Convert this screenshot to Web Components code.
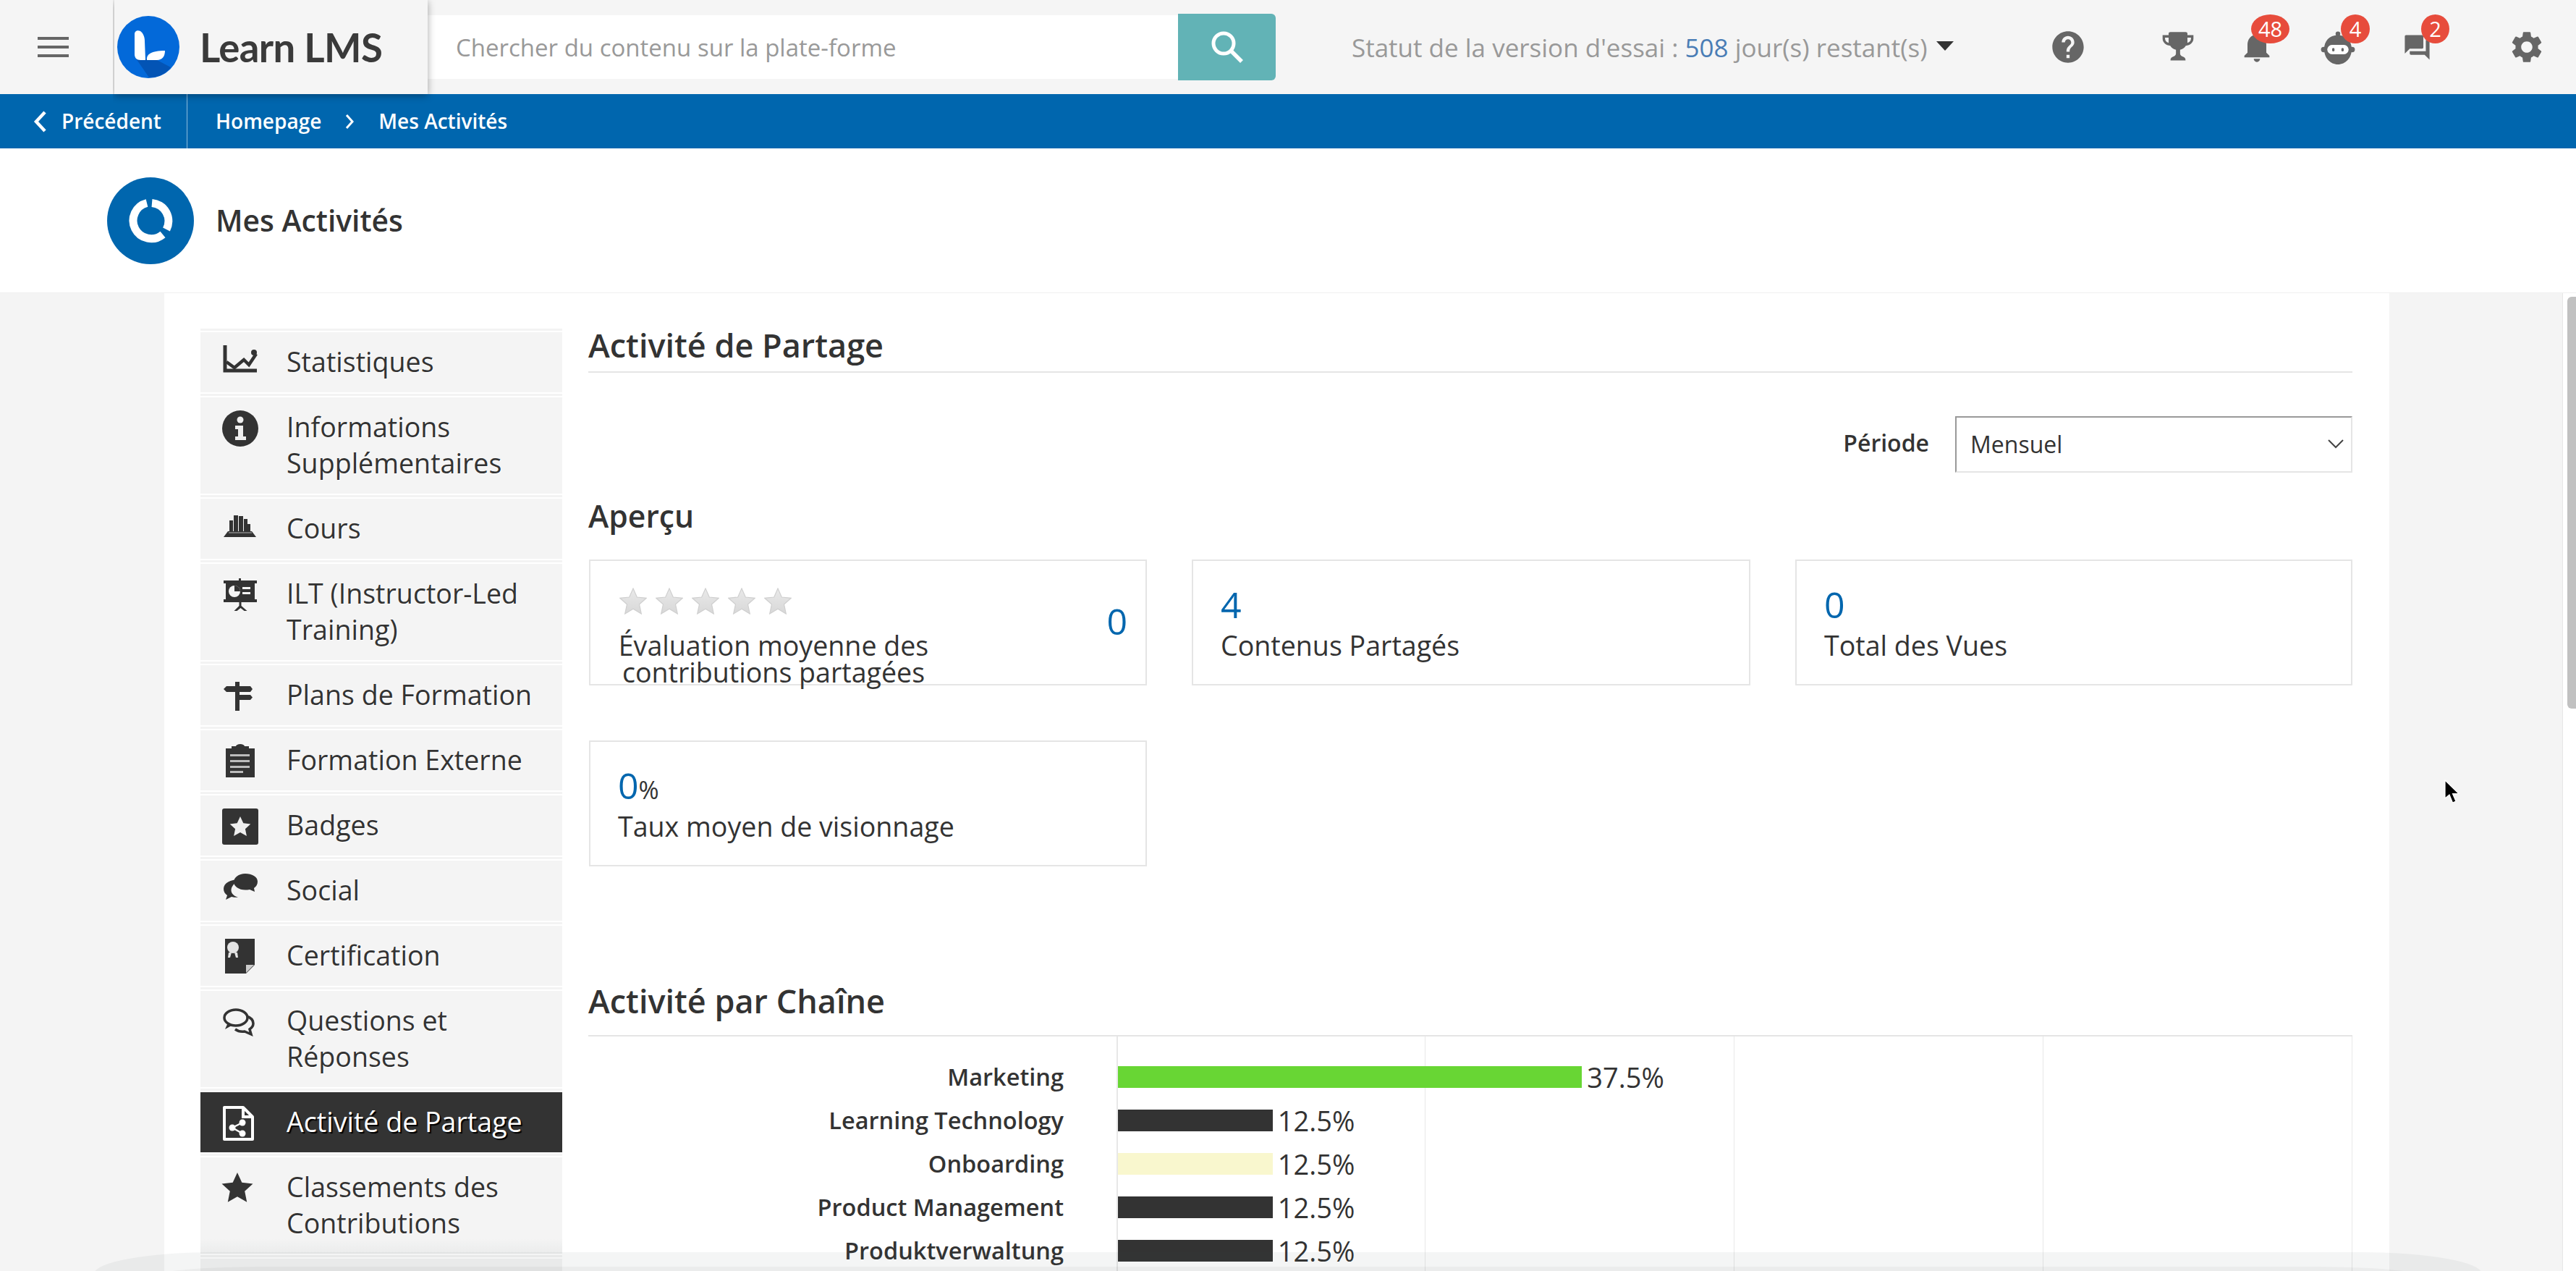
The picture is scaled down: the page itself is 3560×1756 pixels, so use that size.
<!DOCTYPE html>
<html lang="fr"><head><meta charset="utf-8"><title>Mes Activités</title>
<style>
html,body{margin:0;padding:0;height:1756px;overflow:hidden;background:#f4f4f4;font-family:"Open Sans","Noto Sans",sans-serif;color:#333}
</style></head>
<body>
<lms-app>
  <lms-topbar slot="top"></lms-topbar>
  <lms-crumbs slot="top"></lms-crumbs>
  <lms-title slot="top">Mes Activités</lms-title>
  <lms-panel>
    <lms-sidenav slot="side">
      <lms-nav icon="stats">Statistiques</lms-nav>
      <lms-nav icon="info">Informations Supplémentaires</lms-nav>
      <lms-nav icon="books">Cours</lms-nav>
      <lms-nav icon="ilt">ILT (Instructor-Led Training)</lms-nav>
      <lms-nav icon="sign">Plans de Formation</lms-nav>
      <lms-nav icon="clip">Formation Externe</lms-nav>
      <lms-nav icon="badge">Badges</lms-nav>
      <lms-nav icon="social">Social</lms-nav>
      <lms-nav icon="cert">Certification</lms-nav>
      <lms-nav icon="qa">Questions et Réponses</lms-nav>
      <lms-nav icon="share" active>Activité de Partage</lms-nav>
      <lms-nav icon="star" fade>Classements des Contributions</lms-nav>
      <lms-nav icon="none">&nbsp;</lms-nav>
    </lms-sidenav>
    <lms-heading size="top">Activité de Partage</lms-heading>
    <lms-period></lms-period>
    <lms-subhead>Aperçu</lms-subhead>
    <lms-cards>
      <lms-rating-card></lms-rating-card>
      <lms-stat value="4" label="Contenus Partagés"></lms-stat>
      <lms-stat value="0" label="Total des Vues"></lms-stat>
      <lms-stat value="0" unit="%" label="Taux moyen de visionnage"></lms-stat>
    </lms-cards>
    <lms-heading size="chart">Activité par Chaîne</lms-heading>
    <lms-chart>
      <lms-bar label="Marketing" pct="37.5" color="#68d634"></lms-bar>
      <lms-bar label="Learning Technology" pct="12.5" color="#333"></lms-bar>
      <lms-bar label="Onboarding" pct="12.5" color="#f9f7ce"></lms-bar>
      <lms-bar label="Product Management" pct="12.5" color="#333"></lms-bar>
      <lms-bar label="Produktverwaltung" pct="12.5" color="#333"></lms-bar>
    </lms-chart>
  </lms-panel>
  <lms-scrollbar></lms-scrollbar>
  <lms-dock></lms-dock>
  <lms-cursor></lms-cursor>
</lms-app>
<script>
const FONT='"Open Sans","Noto Sans",sans-serif';
function def(name,html,init){
  customElements.define(name,class extends HTMLElement{
    constructor(){super();const r=this.attachShadow({mode:'open'});r.innerHTML=typeof html==='function'?html(this):html;}
    connectedCallback(){ if(init) init(this); }
  });
}
const I={
 help:'<path fill="#666" d="M12 2C6.48 2 2 6.48 2 12s4.48 10 10 10 10-4.48 10-10S17.52 2 12 2zm1 17h-2v-2h2v2zm2.07-7.75l-.9.92C13.45 12.9 13 13.5 13 15h-2v-.5c0-1.1.45-2.1 1.17-2.83l1.24-1.26c.37-.36.59-.86.59-1.41 0-1.1-.9-2-2-2s-2 .9-2 2H8c0-2.21 1.79-4 4-4s4 1.79 4 4c0 .88-.36 1.68-.93 2.25z"/>',
 trophy:'<path fill="#666" d="M8 2.400h8c.6 0 1 .4 1 1v1h3.200v2.200c0 2.500-1.700 4.300-4.100 4.600-.6 1.300-1.700 2.200-3 2.500v2.500c0 1 .7 1.700 1.700 2 .8.3 1.200 1 1.200 2.300H8c0-1.300.4-2 1.200-2.300 1-.3 1.700-1 1.700-2v-2.500c-1.300-.3-2.400-1.200-3-2.500-2.400-.3-4.100-2.100-4.100-4.600V4.400H7v-1c0-.6.4-1 1-1zM5.100 6v.6c0 1.300.7 2.300 1.900 2.700V6H5.100zM17 6v3.300c1.200-.4 1.900-1.400 1.900-2.700V6H17z"/>',
 bell:'<path fill="#666" d="M12 22c1.100 0 2-.9 2-2h-4c0 1.100.89 2 2 2zm6-6v-5c0-3.070-1.640-5.640-4.500-6.320V4c0-.83-.67-1.500-1.500-1.500s-1.500.67-1.500 1.500v.68C7.630 5.360 6 7.920 6 11v5l-2 2v1h16v-1l-2-2z"/>',
 robot:'<circle cx="12" cy="2.600" r="1.500" fill="#666"/><path fill="#666" d="M12 3.500c5.500 0 8.800 3.800 8.800 9 0 5.500-4 9.700-8.800 9.700s-8.800-4.200-8.800-9.700c0-5.200 3.300-9 8.800-9z"/><circle cx="2.900" cy="12.700" r="1.700" fill="#666"/><circle cx="21.100" cy="12.700" r="1.700" fill="#666"/><rect x="5.200" y="9.700" width="13.600" height="6" rx="3" fill="#fff"/><rect x="8.300" y="11.600" width="1.500" height="2.200" rx=".7" fill="#666"/><rect x="14.200" y="11.600" width="1.500" height="2.200" rx=".7" fill="#666"/>',
 chat:'<path fill="#666" d="M21 6h-2v9H6v2c0 .55.45 1 1 1h11l4 4V7c0-.55-.45-1-1-1zm-4 6V3c0-.55-.45-1-1-1H3c-.55 0-1 .45-1 1v14l4-4h10c.55 0 1-.45 1-1z"/>',
 gear:'<path fill="#666" d="M19.140 12.940c.04-.3.06-.61.06-.94 0-.32-.02-.64-.07-.94l2.030-1.580c.18-.14.23-.41.12-.61l-1.920-3.320c-.12-.22-.37-.29-.59-.22l-2.390.96c-.5-.38-1.030-.7-1.620-.94l-.36-2.540c-.04-.24-.24-.41-.48-.41h-3.840c-.24 0-.43.17-.47.41l-.36 2.540c-.59.24-1.130.57-1.620.94l-2.390-.96c-.22-.08-.47 0-.59.22L2.740 8.870c-.12.21-.08.47.12.61l2.030 1.580c-.05.3-.09.63-.09.94s.02.64.07.94l-2.030 1.580c-.18.14-.23.41-.12.61l1.920 3.320c.12.22.37.29.59.22l2.390-.96c.5.38 1.030.7 1.620.94l.36 2.540c.05.24.24.41.48.41h3.840c.24 0 .44-.17.47-.41l.36-2.540c.59-.24 1.130-.56 1.620-.94l2.390.96c.22.08.47 0 .59-.22l1.920-3.320c.12-.22.07-.47-.12-.61l-2.010-1.580zM12 15.600c-1.980 0-3.600-1.620-3.600-3.600s1.620-3.600 3.600-3.600 3.600 1.620 3.600 3.600-1.620 3.600-3.600 3.600z"/>'
};
const N={
 none:'',
 stats:'<path d="M4 0v35h44" fill="none" stroke="#333" stroke-width="5"/><path d="M6 23l11 8 13-11 7 7 10-15" fill="none" stroke="#333" stroke-width="4.500"/><circle cx="44" cy="10" r="4" fill="#333"/>',
 info:'<circle cx="25" cy="25" r="25" fill="#333"/><circle cx="25" cy="13" r="4.500" fill="#eee"/><path d="M18 21h11v15h4v5H18v-5h4V26h-4z" fill="#eee"/>',
 books:'<path fill="#333" d="M2 35l6-8h2V12h5v15h1V5h6v22h1V6h6v21h1V10h5v7h4v10h2l6 8z"/><path d="M9 29h32" stroke="#888" stroke-width="1.500"/>',
 ilt:'<rect x="23" y="2" width="3" height="4" fill="#333"/><path fill="#333" d="M2 5h46v4h-3v22h3v4H2v-4h3V9H2z"/><circle cx="17" cy="20" r="8" fill="#f4f4f4"/><path d="M17 20V12a8 8 0 0 1 8 8z" fill="#333"/><path d="M28 14h11v3H28zM28 21h11v3H28z" fill="#f4f4f4"/><path d="M23.500 35h3v5l8 7h-4l-5-4-5 4h-4l7-7z" fill="#333"/>',
 sign:'<rect x="18" y="5" width="6" height="40" fill="#333"/><path fill="#333" d="M6 11h35l-2 0 3 4-3 4H6l-4-4z"/><path fill="#333" d="M24 23h15l3 3.500-3 3.500H24z"/>',
 clip:'<path fill="#333" d="M5 7h8V4h6a6 3 0 0 1 12 0h6v3h8v40H5z"/><g fill="#bbb"><rect x="11" y="15" width="27" height="3"/><rect x="11" y="23" width="27" height="3"/><rect x="11" y="31" width="27" height="3"/><rect x="11" y="38" width="18" height="3"/></g><rect x="14" y="7" width="22" height="4" fill="#333"/>',
 badge:'<rect x="0" y="0" width="50" height="50" rx="3" fill="#333"/><path fill="#eee" d="M25 11l4.300 9.200 10 1.200-7.400 6.800 2 9.800-8.900-5-8.900 5 2-9.800-7.400-6.800 10-1.200z"/>',
 social:'<path fill="#333" d="M23 8C12 8 2 13 2 21c0 4 2 7 5 9l-2 6 8-4c3 .7 6 1 9 .8-7-2-11-7-9-13 2-5 7-9 10-11z" /><path fill="#333" d="M32 0c9 0 17 4 17 11 0 4-2 7-5 9l1 5-7-3c-2 .4-4 .6-6 .6-9 0-16-5-16-11S23 0 32 0z"/>',
 cert:'<path fill="#333" d="M4 0h41v36l-12 12H4z"/><path fill="#ccc" d="M33 47l11-11H33z"/><circle cx="15" cy="12" r="8" fill="#e4e4e4"/><path d="M9 19h4l-2 7h-3zM17 19h4l1 7h-3z" fill="#e4e4e4"/>',
 qa:'<g fill="none" stroke="#333" stroke-width="3.500"><ellipse cx="19" cy="19" rx="16" ry="11"/><path d="M34 17c6 2 9 6 9 10 0 3-2 6-5 8l2 7-9-4c-4 .6-9 0-13-3"/></g><path d="M8 26l-4 9 9-5z" fill="#333"/>',
 share:'<path d="M3 3h26l13 13v31H3z" fill="none" stroke="#fff" stroke-width="4" stroke-linejoin="round"/><path d="M29 3v13h13" fill="none" stroke="#fff" stroke-width="4"/><g fill="#fff"><circle cx="14" cy="31" r="4.500"/><circle cx="28" cy="24" r="4.500"/><circle cx="28" cy="39" r="4.500"/></g><path d="M14 31l14-7M14 31l14 8" stroke="#fff" stroke-width="2.500"/>',
 star:'<path fill="#333" d="M21 3l6.300 13.800 15.200 1.800-11.300 10.200 3 15-13.200-7.500-13.200 7.500 3-15L-.5 18.600l15.200-1.800z"/>'
};

def('lms-app',`<style>
:host{display:block;position:relative;width:3560px;height:1756px;overflow:hidden}
</style><slot name="top"></slot><slot></slot>`);

def('lms-topbar',`<style>
:host{display:flex;height:130px;background:#f5f5f5;align-items:stretch;font-family:${FONT};position:relative;z-index:2}
.burger{width:106px;padding-left:52px;display:flex;align-items:center}
.logo{width:433px;display:flex;align-items:center;gap:28px;box-sizing:border-box;padding-left:4px;background:#f5f5f5;box-shadow:0 2px 10px rgba(0,0,0,.35);clip-path:inset(0 -12px -14px -2px)}
.logo span{font:700 54.500px/1 Lato,${FONT};color:#3a3a3a;letter-spacing:-.6px;white-space:nowrap}
.search{display:flex;align-items:center}
.field{width:1037px;height:88px;background:#fff;display:flex;align-items:center;padding-left:39px;box-sizing:border-box;color:#999;font-size:33px;white-space:nowrap}
.btn{width:135px;height:92px;background:#62b3b6;border-radius:0 6px 6px 0;display:flex;align-items:center;justify-content:center}
.status{margin-left:105px;display:flex;align-items:center;font-size:35px;color:#999;white-space:nowrap}
.status b{font-weight:400;color:#4a7db5}
.caret{width:0;height:0;border:12px solid transparent;border-top:13px solid #333;border-bottom:0;margin-left:12px;margin-top:-4px}
.icons{margin-left:auto;padding-right:42px;display:flex;align-items:center}
.ic{position:relative;width:52px;height:52px;display:flex;align-items:center;justify-content:center}
.ic svg{width:52px;height:52px;display:block;flex:none}
.bd{position:absolute;top:-19px;height:40px;background:#e74c3c;color:#fff;border-radius:50%;font-size:29px;line-height:40px;text-align:center}
</style>
<div class="burger"><svg width="43" height="28" viewBox="0 0 43 28"><path d="M0 0h43v4H0zM0 12h43v4H0zM0 24h43v4H0z" fill="#666"/></svg></div>
<div class="logo"><svg width="86" height="88" viewBox="0 0 86 88"><circle cx="43" cy="44" r="43" fill="#0369d9"/><path d="M26 60L44 86Q64 86 74 72L55 62z" fill="#0354b5"/><path d="M24 26c0-4 4-6 8-4 4 3 6 8 6 14l1 26H32c-5 0-8-3-8-8z" fill="#fff"/><path d="M41 62c-1-8 6-13 25-13 0 8-4 13-11 13z" fill="#fff"/></svg><span>Learn LMS</span></div>
<div class="search"><div class="field">Chercher du contenu sur la plate-forme</div><div class="btn"><svg width="46" height="46" viewBox="0 0 46 46"><circle cx="18" cy="18" r="14" fill="none" stroke="#fff" stroke-width="5"/><path d="M28 28l15 15" stroke="#fff" stroke-width="5.500"/></svg></div></div>
<div class="status"><span>Statut de la version d'essai : <b>508</b> jour(s) restant(s)</span><i class="caret"></i></div>
<div class="icons">
 <span class="ic" style="margin-right:100px"><svg viewBox="0 0 24 24">${I.help}</svg></span>
 <span class="ic" style="margin-right:57px"><svg viewBox="2 0 20 24" preserveAspectRatio="none">${I.trophy}</svg></span>
 <span class="ic" style="margin-right:60px;margin-top:-2px"><svg viewBox="0 0 24 24">${I.bell}</svg><span class="bd" style="left:18px;width:53px;top:-18px">48</span></span>
 <span class="ic" style="margin-right:57px;margin-top:4px"><svg viewBox="0 0 24 24">${I.robot}</svg><span class="bd" style="left:30px;width:40px;top:-21px">4</span></span>
 <span class="ic" style="margin-right:100px"><svg viewBox="0 0 24 24" style="width:41px;height:41px">${I.chat}</svg><span class="bd" style="left:32px;width:39px">2</span></span>
 <span class="ic"><svg viewBox="0 0 24 24">${I.gear}</svg></span>
</div>`);

def('lms-crumbs',`<style>
:host{display:flex;height:75px;background:#0066ae;color:#fff;font:600 28px/75px ${FONT};align-items:center;white-space:nowrap}
.back{width:259px;box-sizing:border-box;padding-left:45px;display:flex;align-items:center;gap:20px;border-right:1px solid #8fbbdc;height:75px}
.trail{padding-left:39px;display:flex;align-items:center}
.ch{margin:0 34px 0 33px;display:block}
</style>
<div class="back"><svg width="20" height="30" viewBox="0 0 20 30"><path d="M17 2L5 15l12 13" fill="none" stroke="#fff" stroke-width="4.500"/></svg><span>Précédent</span></div>
<div class="trail"><span>Homepage</span><svg class="ch" width="12" height="22" viewBox="0 0 12 22"><path d="M2 2l8 9-8 9" fill="none" stroke="#fff" stroke-width="3"/></svg><span>Mes Activités</span></div>`);

def('lms-title',`<style>
:host{display:flex;align-items:center;height:199px;background:#fff;border-bottom:1px solid #f0f0f0;padding-left:148px;gap:30px;font:600 40.800px/1 ${FONT};color:#333}
svg{display:block}
</style>
<svg width="120" height="120" viewBox="0 0 120 120"><circle cx="60" cy="60" r="60" fill="#0066ae"/><g fill="none" stroke="#fff" stroke-width="11"><path d="M62 35.500A25 25 0 0 1 82 72"/><path d="M77 79A25 25 0 1 1 55 35.500"/></g></svg><span><slot></slot></span>`);

def('lms-panel',`<style>
:host{display:flex;position:absolute;left:227px;top:405px;width:3075px;height:1351px;background:#fff;box-sizing:border-box;padding:47px 51px 0 50px;overflow:hidden;font-family:${FONT}}
.side{width:500px;flex:none}
.main{margin-left:36px;flex:1;min-width:0}
</style>
<div class="side"><slot name="side"></slot></div>
<div class="main"><slot></slot></div>`);

def('lms-sidenav',`<style>:host{display:block}</style><slot></slot>`);

def('lms-nav',h=>{
  const a=h.hasAttribute('active');const ic=N[h.getAttribute('icon')]||'';
  return `<style>
:host{display:block;font-family:${FONT}}
.sep{height:3px;margin:2px 0;background:#f3f3f3}
.row{display:flex;background:${a?'#333':h.hasAttribute('fade')?'linear-gradient(#f4f4f4 84%,#ebecec)':'#f4f4f4'};color:${a?'#fff':'#333'};padding:16px 0 17px 30px;font-size:37.600px;line-height:50px;text-shadow:${a?'2px 2px 1px #000':'1px 1px 0 #fff'}}
svg{flex:none;display:block;margin:2px 0 -2px;overflow:visible}
.t{margin-left:39px;width:370px}
</style><div class="sep"></div><div class="row"><svg width="50" height="50" viewBox="0 0 50 50">${ic}</svg><div class="t"><slot></slot></div></div>`;
});

def('lms-heading',h=>{
  const chart=h.getAttribute('size')==='chart';
  return `<style>
:host{display:block;font:600 45px/50px ${FONT};color:#333;border-bottom:2px solid #e5e5e5;padding-bottom:${chart?22:11}px;margin-top:${chart?161:0}px}
</style><slot></slot>`;
});

def('lms-period',`<style>
:host{display:flex;justify-content:flex-end;align-items:center;margin-top:60px;font-family:${FONT}}
label{font:600 32px/1 ${FONT};color:#333;margin-right:36px;margin-top:-4px}
.sel{width:549px;height:78px;box-sizing:border-box;border:2px solid;border-color:#999 #e5e5e5 #e5e5e5 #999;display:flex;align-items:center;justify-content:space-between;padding:0 10px 2px 19px;font-size:32px;color:#333;background:#fff}
</style><label>Période</label><div class="sel"><span>Mensuel</span><svg width="22" height="14" viewBox="0 0 22 14"><path d="M1 2l10 10L21 2" fill="none" stroke="#444" stroke-width="2"/></svg></div>`);

def('lms-subhead',`<style>:host{display:block;margin-top:35px;font:600 42.700px/50px ${FONT};color:#333}</style><slot></slot>`);

def('lms-cards',`<style>:host{display:grid;grid-template-columns:771px 772px 770px;justify-content:space-between;row-gap:76px;margin-top:35px;margin-left:1px}</style><slot></slot>`);

def('lms-stat',h=>`<style>
:host{display:block;height:174px;box-sizing:border-box;border:2px solid #e5e5e5;padding:30px 0 0 38px;font-family:${FONT};background:#fff}
.v{font-size:50px;line-height:60px;color:#0066ae;height:60px}
.v small{font-size:34px;color:#333}
.l{font-size:37.600px;line-height:50px;color:#333;margin-top:2px}
</style><div class="v">${h.getAttribute('value')}${h.getAttribute('unit')?`<small>${h.getAttribute('unit')}</small>`:''}</div><div class="l">${h.getAttribute('label')}</div>`);

const STAR='<svg width="38" height="38" viewBox="0 0 38 38"><defs><linearGradient id="g" x1="0" y1="0" x2="0" y2="1"><stop offset="0" stop-color="#e9e9e9"/><stop offset="1" stop-color="#d8d8d8"/></linearGradient></defs><path d="M19 1l5.300 12 13 1.300-9.800 8.700 2.800 13L19 29.200 7.700 36 10.500 23 .7 14.300l13-1.300z" fill="url(#g)" stroke="#cfcfcf" stroke-width="1.200"/></svg>';
def('lms-rating-card',`<style>
:host{display:flex;height:174px;box-sizing:border-box;border:2px solid #e5e5e5;padding:37px 0 0 40px;font-family:${FONT};background:#fff;position:relative}
.stars{display:flex;gap:12px;height:37px}
.stars svg{display:block}
.l{font-size:37.600px;line-height:37px;color:#333;width:430px;margin:24px 0 0 -2px;text-align:center}
.v{margin-left:auto;margin-right:25px;margin-top:16px;font-size:50px;line-height:60px;color:#0066ae}
</style><div><div class="stars">${STAR.repeat(5)}</div><div class="l">Évaluation moyenne des contributions partagées</div></div><div class="v">0</div>`);

def('lms-chart',`<style>
:host{display:block;height:400px;padding-top:26px;box-sizing:border-box;position:relative;
background:linear-gradient(#e8e8e8,#e8e8e8) 730px 0/2px 100% no-repeat,
 repeating-linear-gradient(90deg,transparent 0,transparent 425.500px,#e8e8e8 425.500px,#e8e8e8 427px) 730px 0/1708px 100% no-repeat}
</style><slot></slot>`);

def('lms-bar',h=>{
  const p=parseFloat(h.getAttribute('pct'));
  return `<style>
:host{display:flex;height:60px;align-items:center;font-family:${FONT}}
.n{width:657px;text-align:right;font:600 32.500px/60px ${FONT};color:#333;white-space:nowrap;margin-right:75px;flex:none}
.b{height:30px;width:${p*17.1}px;background:${h.getAttribute('color')};flex:none}
.p{margin-left:7px;font-size:38px;line-height:60px;color:#333}
</style><div class="n">${h.getAttribute('label')}</div><div class="b"></div><div class="p">${p}%</div>`;
});

def('lms-scrollbar',`<style>
:host{position:absolute;right:0;top:405px;bottom:0;width:18px;background:#fff;border-left:1px solid #e6e6e6}
i{position:absolute;left:6px;right:0;top:5px;height:569px;background:#c1c1c1;border-radius:6px 0 0 6px;display:block}
</style><i></i>`);

def('lms-dock',`<style>
:host{position:absolute;left:130px;right:130px;top:1730px;height:60px;background:rgba(60,70,70,.055);border-radius:170px 170px 0 0/30px 30px 0 0;pointer-events:none}
i{position:absolute;left:60px;right:60px;top:20px;height:40px;background:rgba(0,0,0,.035);border-radius:170px 170px 0 0/20px 20px 0 0;display:block}
</style><i></i>`);

def('lms-cursor',`<style>
:host{position:absolute;left:3378px;top:1077px;display:block;width:22px;height:34px}
svg{display:block}
</style><svg width="22" height="34" viewBox="0 0 22 34"><path d="M1 1v25l6-5 4.500 11 4.500-2-4.500-10.500H20z" fill="#000" stroke="#fff" stroke-width="1.200"/></svg>`);
</script>
</body></html>
